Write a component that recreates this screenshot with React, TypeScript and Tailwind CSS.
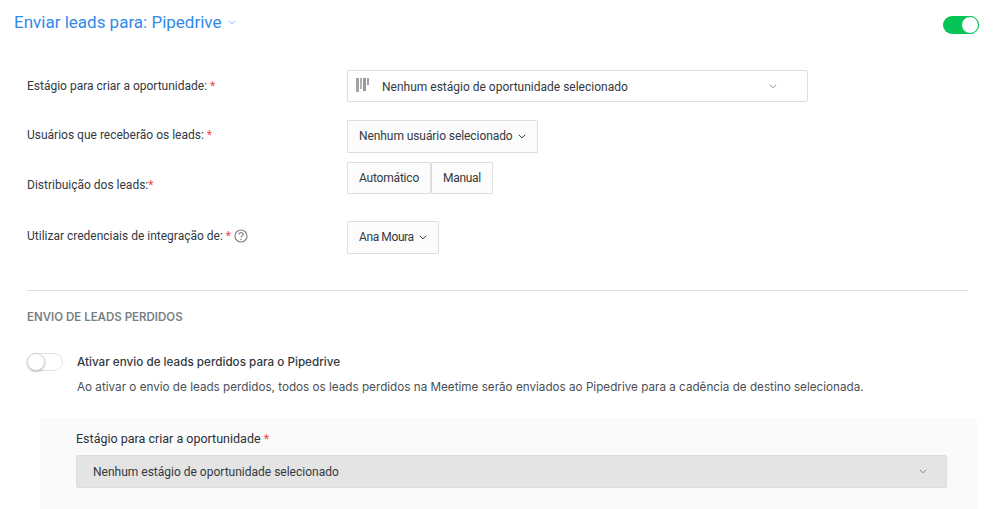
import React from "react";

const base = "font-['Roboto','Noto_Sans',sans-serif]";

function Chevron({ className = "" }: { className?: string }) {
  return (
    <svg width="8" height="5" viewBox="0 0 8 5" fill="none" className={className}>
      <path d="M0.8 0.8 L4 3.8 L7.2 0.8" stroke="currentColor" strokeWidth="1" />
    </svg>
  );
}

function Req() {
  return <span className="text-[#f0454f]"> *</span>;
}

function Row({ label, children, className = "", labelClass = "" }: { label: React.ReactNode; children: React.ReactNode; className?: string; labelClass?: string }) {
  return (
    <div className={`flex items-center ${className}`}>
      <div className={`w-[347px] pl-[27px] text-[12px] text-[#33393f] ${labelClass}`}>{label}</div>
      {children}
    </div>
  );
}

function Btn({ children, className = "" }: { children: React.ReactNode; className?: string }) {
  return (
    <div className={`flex items-center gap-[5px] border border-[#dedede] bg-[#fcfcfc] rounded-[1px] text-[12px] text-[#33393f] pl-[11px] pr-[11px] ${className}`}>
      {children}
    </div>
  );
}

export default function App() {
  return (
    <div className={`w-[994px] h-[509px] overflow-hidden bg-white ${base}`}>
      <div className="flex items-center justify-between pl-[14px] pr-[15px] pt-[10px] h-[34px]">
        <div className="flex items-center gap-[7px] text-[17px] leading-[22px] text-[#2f8ae8]">
          <span>Enviar leads para: Pipedrive</span>
          <Chevron className="text-[#8fb8e6]" />
        </div>
        <div className="relative mt-[6px] w-[36px] h-[18px] rounded-full bg-[#06c455]">
          <div className="absolute right-0 top-0 w-[18px] h-[18px] rounded-full bg-white border border-[#06c455]" />
        </div>
      </div>

      <Row label={<>Estágio para criar a oportunidade:<Req /></>} className="mt-[36px]">
        <div className="flex items-center w-[461px] h-[32px] border border-[#dedede] rounded-[2px] bg-white text-[12px] text-[#33393f]">
          <svg width="14" height="14" viewBox="0 0 14 14" className="ml-[8px] mr-[12px] mb-[3px] shrink-0">
            <rect x="0" y="0" width="3" height="14" fill="#a3a3a3" />
            <rect x="4" y="0" width="2" height="11" fill="#b3b3b3" />
            <rect x="7" y="0" width="3" height="13" fill="#9a9a9a" />
            <rect x="11" y="0" width="2" height="7" fill="#a3a3a3" />
          </svg>
          <span className="flex-1 pt-[1px]">Nenhum estágio de oportunidade selecionado</span>
          <Chevron className="mr-[30px] text-[#9a9a9a]" />
        </div>
      </Row>

      <Row label={<>Usuários que receberão os leads:<Req /></>} className="mt-[18px]" labelClass="mb-[4px]">
        <Btn className="h-[33px] pb-[2px] tracking-[-0.08px]">
          Nenhum usuário selecionado
          <Chevron className="mt-[2px]" />
        </Btn>
      </Row>

      <div className="flex mt-[9px]">
        <div className="w-[347px] pl-[27px] pt-[14px] text-[12px] text-[#33393f]">Distribuição dos leads:<span className="text-[#f0454f]">*</span></div>
        <div className="flex">
          <Btn className="h-[32px] pb-[1px] tracking-[-0.2px]">Automático</Btn>
          <Btn className="h-[32px] pb-[1px] tracking-[-0.3px]">Manual</Btn>
        </div>
      </div>

      <Row
        label={
          <span className="flex items-center gap-[3px]">
            <span>Utilizar credenciais de integração de:<Req /></span>
            <svg width="14" height="14" viewBox="0 0 14 14" fill="none" className="text-[#858585]">
              <circle cx="7" cy="7" r="6" stroke="currentColor" strokeWidth="1.2" />
              <path d="M4.9 5.5 C4.9 3 9.1 3 9.1 5.4 C9.1 6.9 7 6.9 7 8.6" stroke="currentColor" strokeWidth="1.1" />
              <circle cx="7" cy="10.4" r="0.75" fill="currentColor" />
            </svg>
          </span>
        }
        className="mt-[27px]"
        labelClass="mb-[4px]"
      >
        <Btn className="h-[33px] pb-[2px] tracking-[-0.4px]">
          Ana Moura
          <Chevron className="mt-[2px]" />
        </Btn>
      </Row>

      <div className="ml-[27px] mr-[26px] mt-[36px] border-t border-[#e0e0e0]" />

      <div className="ml-[27px] mt-[18px] font-['Inter',sans-serif] text-[11.5px] leading-[16px] font-semibold text-[#7a7f85]">ENVIO DE LEADS PERDIDOS</div>

      <div className="flex ml-[27px] mt-[28px]">
        <div className="relative w-[36px] h-[18px] rounded-full bg-white border border-[#e2e2e2] shrink-0">
          <div className="absolute -left-px -top-px w-[18px] h-[18px] rounded-full bg-white border border-[#d5d5d5] shadow-[0_1px_2px_rgba(0,0,0,0.25)]" />
        </div>
        <div className="ml-[14px] font-['Inter',sans-serif]">
          <div className="text-[11.7px] leading-[18px] font-medium text-[#33393f]">Ativar envio de leads perdidos para o Pipedrive</div>
          <div className="mt-[7px] text-[11.7px] leading-[18px] text-[#4a5056]">
            Ao ativar o envio de leads perdidos, todos os leads perdidos na Meetime serão enviados ao Pipedrive para a cadência de destino selecionada.
          </div>
        </div>
      </div>

      <div className="ml-[40px] mr-[17px] mt-[22px] h-[91px] bg-[#fafafa] pl-[36px] pr-[30px] pt-[12px]">
        <div className="text-[12.5px] leading-[18px] text-[#2b3138]">Estágio para criar a oportunidade<Req /></div>
        <div className="flex items-center justify-between mt-[7px] h-[33px] bg-[#e4e4e4] border border-[#dcdcdc] rounded-[2px] pl-[16px] pr-[19px] text-[12px] text-[#33393f]">
          <span>Nenhum estágio de oportunidade selecionado</span>
          <Chevron className="text-[#8a8a8a]" />
        </div>
      </div>
    </div>
  );
}
